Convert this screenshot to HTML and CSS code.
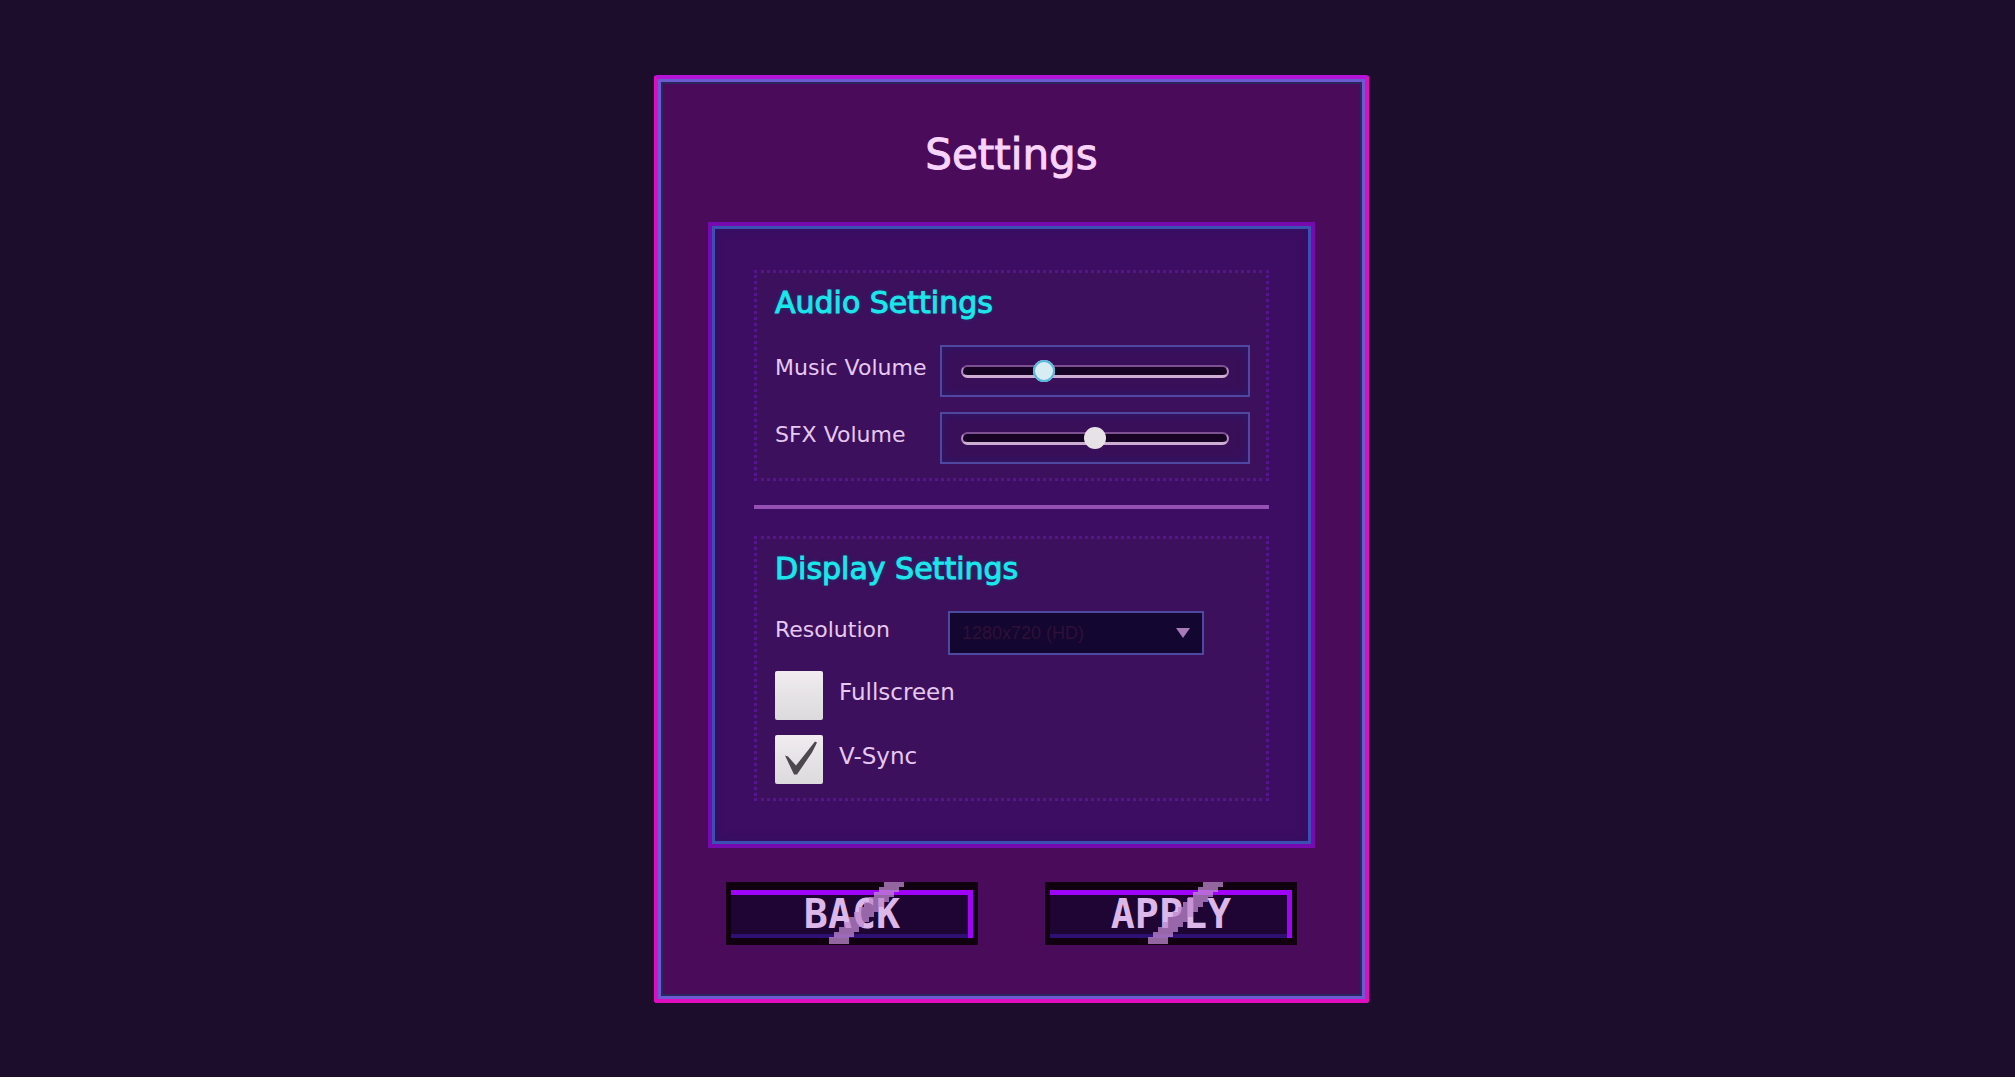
FILE: index.html
```
<!DOCTYPE html>
<html lang="en">
<head>
  <meta charset="UTF-8" />
  <meta name="viewport" content="width=device-width, initial-scale=1.0" />
  <title>Settings</title>
  <link rel="stylesheet" href="styles.css">
</head>
<body>
  <main class="screen">
    <form class="window">
      <h1>Settings</h1>

      <div class="panel">
        <section class="group">
          <h2>Audio Settings</h2>
          <div class="row">
            <label for="music">Music Volume</label>
            <div class="slider-box active">
              <input type="range" id="music" min="0" max="100" value="29" />
            </div>
          </div>
          <div class="row">
            <label for="sfx">SFX Volume</label>
            <div class="slider-box">
              <input type="range" id="sfx" min="0" max="100" value="50" />
            </div>
          </div>
        </section>

        <hr class="divider" />

        <section class="group">
          <h2>Display Settings</h2>
          <div class="row select-row">
            <label for="resolution">Resolution</label>
            <div class="select-box">
              <select id="resolution">
                <option>1280x720 (HD)</option>
              </select>
              <svg class="arrow" viewBox="0 0 16 10" width="16" height="10"><path d="M1 0H15L8 10Z" /></svg>
            </div>
          </div>
          <div class="check-row">
            <input type="checkbox" id="fullscreen" />
            <label for="fullscreen">Fullscreen</label>
          </div>
          <div class="check-row">
            <span class="check-box">
              <input type="checkbox" id="vsync" checked />
              <svg class="tick" viewBox="0 0 48 48"><path d="M10 20L13 21L21 30L40 6L42 7L37 17L22 39H19Z" /></svg>
            </span>
            <label for="vsync">V-Sync</label>
          </div>
        </section>
      </div>

      <div class="buttons">
        <button type="button" class="button">BACK
          <svg class="slash" viewBox="0 0 76 62"><path d="M55 0h20v5h-5v5h-5v5h-5v5h-5v5h-5v5h-5v5h-5v5h-5v5h-5v5h-5v5h-5v7h-20v-7h5v-5h5v-5h5v-5h5v-5h5v-5h5v-5h5v-5h5v-5h5v-5h5v-5h5z" /></svg>
        </button>
        <button type="button" class="button">APPLY
          <svg class="slash" viewBox="0 0 76 62"><path d="M55 0h20v5h-5v5h-5v5h-5v5h-5v5h-5v5h-5v5h-5v5h-5v5h-5v5h-5v5h-5v7h-20v-7h5v-5h5v-5h5v-5h5v-5h5v-5h5v-5h5v-5h5v-5h5v-5h5v-5h5z" /></svg>
        </button>
      </div>
    </form>
  </main>
</body>
</html>
```

FILE: styles.css
```
* {
  box-sizing: border-box;
}

html {
  background-color: #fff;
}

body {
  margin: 0;
  font-family: 'DejaVu Sans', sans-serif;
  color: #e6c8f0;
}

.screen {
  min-height: calc(100vh - 3px);
  padding: 75px 20px 72px 28px;
  background-color: #1b0d2b;
}

.window {
  max-width: 715px;
  margin: 0 auto;
  padding: 50px 50px 54px;
  background-color: #4b0b5b;
  border: 4px solid #e00cc0;
  border-top-color: #b414d8;
  border-radius: 3px;
  box-shadow: inset 0 0 0 3px #6a5cd0, inset 0 0 0 5px #2c2560;
}

h1 {
  margin: 0 0 41px;
  font-size: 42px;
  line-height: 52px;
  font-weight: normal;
  text-align: center;
  color: #f8d4fa;
  -webkit-text-stroke: 1px #f8d4fa;
}

.panel {
  padding: 44px 42px 43px;
  background-color: #3c0d62;
  border: 4px solid #7609b0;
  box-shadow: inset 0 0 0 3px #3c50b4, inset 0 0 10px 4px #320f62;
}

.group {
  padding: 11px 16px 14px 18px;
  background-color: #3c105c;
  border: 3px dotted #561490;
}

h2 {
  margin: 0 0 23px;
  font-size: 30px;
  line-height: 38px;
  font-weight: normal;
  color: #1ce6ea;
  -webkit-text-stroke: 1px #1ce6ea;
  text-shadow: 0 0 4px #0f4a80;
}

.row {
  display: flex;
  align-items: center;
  justify-content: space-between;
  margin-bottom: 15px;
}

.row:last-child {
  margin-bottom: 0;
}

.row label {
  padding-bottom: 6px;
  font-size: 22px;
  line-height: 26px;
}

.slider-box {
  display: flex;
  align-items: center;
  width: 310px;
  height: 52px;
  padding: 0 19px;
  background-color: #3a0f5a;
  border: 2px solid #5048a0;
  box-shadow: inset 0 0 10px #281a6c;
}

.slider-box input {
  appearance: none;
  width: 100%;
  height: 13px;
  margin: 0;
  background-color: #170424;
  border: 2px solid #b88cc4;
  border-top-color: #7d5092;
  border-bottom: 3px solid #cfaed4;
  border-radius: 7px;
}

.slider-box input::-webkit-slider-thumb {
  appearance: none;
  width: 22px;
  height: 22px;
  border-radius: 50%;
  background-color: #e6e2e6;
}

.slider-box.active input::-webkit-slider-thumb {
  background-color: #d8ecf4;
  box-shadow: inset 0 0 0 2px #58b8dc;
}

.divider {
  height: 4px;
  margin: 24px 0 27px;
  border: none;
  background-color: #9450b4;
}

.select-row {
  justify-content: flex-start;
  margin-bottom: 16px;
}

.select-row label {
  width: 173px;
}

.select-box {
  position: relative;
  width: 256px;
}

.select-box select {
  appearance: none;
  display: block;
  width: 100%;
  height: 44px;
  padding: 0 12px;
  font-family: 'Liberation Sans', sans-serif;
  font-size: 18px;
  color: #301036;
  background-color: #130631;
  border: 2px solid #4c4aa0;
  border-radius: 0;
}

.arrow {
  position: absolute;
  top: 17px;
  right: 13px;
  fill: #a87ab8;
  pointer-events: none;
}

.check-row {
  display: flex;
  align-items: center;
  gap: 16px;
  margin-bottom: 15px;
}

.check-row:last-child {
  margin-bottom: 0;
}

.check-row input {
  appearance: none;
  display: block;
  width: 48px;
  height: 49px;
  margin: 0;
  background: linear-gradient(#f0ecf0, #dcdadc);
  border-radius: 2px;
}

.check-row label {
  padding-bottom: 8px;
  font-size: 23px;
  line-height: 26px;
}

.check-box {
  position: relative;
}

.tick {
  position: absolute;
  top: 0;
  left: 0;
  width: 48px;
  height: 49px;
  fill: #4c484e;
  pointer-events: none;
}

.buttons {
  display: flex;
  justify-content: space-between;
  margin-top: 34px;
  padding: 0 18px;
}

.button {
  position: relative;
  width: 252px;
  height: 63px;
  padding: 0;
  font-family: 'DejaVu Sans Mono', monospace;
  font-size: 40px;
  font-weight: bold;
  line-height: 46px;
  color: #dcb8ea;
  background-color: #1f0534;
  border: 5px solid #110010;
  border-top-width: 8px;
  border-bottom-width: 7px;
  box-shadow: inset -5px 5px 0 #9f04f8, inset 0 -4px 0 #2e1074;
}

.slash {
  position: absolute;
  top: -8px;
  left: 98px;
  width: 76px;
  height: 62px;
  fill: #c088d0;
  opacity: 0.75;
}
```
